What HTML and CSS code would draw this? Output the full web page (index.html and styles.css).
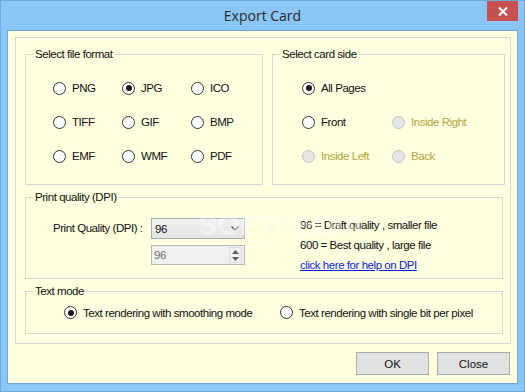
FILE: index.html
```html
<!DOCTYPE html>
<html lang="en">
<head>
    <meta charset="UTF-8">
    <title>Export Card</title>
    <link rel="stylesheet" href="styles.css">
</head>
<body>
    <div class="window">
        <div class="titlebar">
            <span class="title">Export Card</span>
            <button class="close-x" title="Close">
                <svg width="10" height="9" viewBox="0 0 10 9"><path d="M1 0.5 L9 8.5 M9 0.5 L1 8.5" stroke="#fff" stroke-width="2"/></svg>
            </button>
        </div>

        <div class="client">
            <div class="panel">
                <div class="row-top">
                    <div class="group group-format">
                        <span class="group-title">Select file format</span>
                        <div class="radio-grid">
                            <label class="radio"><span class="dot"></span>PNG</label>
                            <label class="radio"><span class="dot checked"></span>JPG</label>
                            <label class="radio"><span class="dot"></span>ICO</label>
                            <label class="radio"><span class="dot"></span>TIFF</label>
                            <label class="radio"><span class="dot"></span>GIF</label>
                            <label class="radio"><span class="dot"></span>BMP</label>
                            <label class="radio"><span class="dot"></span>EMF</label>
                            <label class="radio"><span class="dot"></span>WMF</label>
                            <label class="radio"><span class="dot"></span>PDF</label>
                        </div>
                    </div>

                    <div class="group group-side">
                        <span class="group-title">Select card side</span>
                        <div class="radio-grid side-grid">
                            <label class="radio"><span class="dot checked"></span>All Pages</label>
                            <span></span>
                            <label class="radio"><span class="dot"></span>Front</label>
                            <label class="radio disabled"><span class="dot"></span>Inside Right</label>
                            <label class="radio disabled"><span class="dot"></span>Inside Left</label>
                            <label class="radio disabled"><span class="dot"></span>Back</label>
                        </div>
                    </div>
                </div>

                <div class="group group-dpi">
                    <span class="group-title">Print quality (DPI)</span>
                    <div class="dpi-row">
                        <span class="dpi-label">Print Quality (DPI) :</span>
                        <div class="dpi-controls">
                            <div class="combo">
                                <span>96</span>
                                <svg width="8" height="5" viewBox="0 0 8 5"><path d="M0.5 0.5 L4 4 L7.5 0.5" fill="none" stroke="#555" stroke-width="1.2"/></svg>
                            </div>
                            <div class="spin">
                                <span>96</span>
                                <div class="spin-btns">
                                    <svg width="7" height="4" viewBox="0 0 7 4"><path d="M0 4 L3.5 0 L7 4 Z" fill="#606060"/></svg>
                                    <svg width="7" height="4" viewBox="0 0 7 4"><path d="M0 0 L3.5 4 L7 0 Z" fill="#606060"/></svg>
                                </div>
                            </div>
                        </div>
                        <div class="dpi-hint">
                            <p>96 = Draft quality , smaller file</p>
                            <p>600 = Best quality , large file</p>
                            <p><a href="#">click here for help on DPI</a></p>
                        </div>
                    </div>
                </div>

                <div class="group group-text">
                    <span class="group-title">Text mode</span>
                    <div class="text-modes">
                        <label class="radio mode-first"><span class="dot checked"></span>Text rendering with smoothing mode</label>
                        <label class="radio"><span class="dot"></span>Text rendering with single bit per pixel</label>
                    </div>
                </div>
            </div>

            <div class="actions">
                <button class="btn">OK</button>
                <button class="btn">Close</button>
            </div>

            <div class="watermark">SOFTPEDIA</div>
        </div>
    </div>
</body>
</html>
```

FILE: styles.css
```css
* {
    box-sizing: border-box;
}
body {
    margin: 0;
    font-family: "Liberation Sans", Arial, sans-serif;
    font-size: 11.5px;
    letter-spacing: -0.45px;
    color: #111;
}
.window {
    width: 525px;
    height: 392px;
    background-color: #8bc6f7;
    border: 1px solid #6fa8dc;
}
.titlebar {
    height: 29px;
    display: grid;
    grid-template-columns: 1fr auto 1fr;
}
.title {
    grid-column: 2;
    align-self: center;
    font-family: "Open Sans", "Liberation Sans", sans-serif;
    font-size: 14px;
    letter-spacing: 0;
    color: #2a2a2a;
    padding-bottom: 1px;
}
.close-x {
    grid-column: 3;
    justify-self: end;
    align-self: start;
    width: 31px;
    height: 20px;
    margin-right: 6px;
    padding: 0;
    border: none;
    background-color: #c75050;
    display: flex;
    align-items: center;
    justify-content: center;
}
.client {
    position: relative;
    margin: 0 6px;
    height: 354px;
    background-color: #ffffe0;
    border: 1px solid #6ea5d6;
}
.panel {
    margin: 6px 0 0 7px;
    width: 496px;
    height: 307px;
    border: 1px solid #d6d6d6;
    padding: 16px 0 0 9px;
}
.row-top {
    display: flex;
    gap: 9px;
}
.group {
    position: relative;
    border: 1px solid #d6d6d6;
}
.group-title {
    position: absolute;
    top: -8px;
    left: 7px;
    padding: 0 2px;
    line-height: 14px;
    background-color: #ffffe0;
}
.group-format {
    width: 238px;
    height: 131px;
}
.group-side {
    width: 233px;
    height: 131px;
}
.group-dpi {
    width: 478px;
    height: 82px;
    margin-top: 12px;
}
.group-text {
    width: 478px;
    height: 43px;
    margin-top: 12px;
}

/* radio buttons */
.radio-grid {
    display: grid;
    grid-template-columns: 69px 69px 69px;
    grid-auto-rows: 34px;
    padding: 16px 0 0 27px;
}
.side-grid {
    grid-template-columns: 90px 90px;
    padding-left: 29px;
}
.radio {
    display: flex;
    align-items: center;
    gap: 6px;
    white-space: nowrap;
}
.dot {
    position: relative;
    width: 13px;
    height: 13px;
    border: 1px solid #333;
    border-radius: 50%;
    background-color: #fff;
    flex-shrink: 0;
}
.dot.checked::after {
    content: "";
    position: absolute;
    left: 2.5px;
    top: 2.5px;
    width: 6px;
    height: 6px;
    border-radius: 50%;
    background-color: #1b1b1b;
}
.radio.disabled {
    color: #b0a63a;
}
.radio.disabled .dot {
    border-color: #c2c2c2;
    background-color: #e6e6e6;
}

/* dpi */
.dpi-row {
    display: flex;
    padding: 20px 0 0 27px;
}
.dpi-label {
    width: 98px;
    line-height: 21px;
    white-space: nowrap;
}
.dpi-controls {
    width: 94px;
}
.combo {
    height: 21px;
    border: 1px solid #acacac;
    background: linear-gradient(#f1f1f1, #e4e4e4);
    display: flex;
    align-items: center;
    justify-content: space-between;
    padding: 0 5px 0 3px;
}
.spin {
    height: 20px;
    margin-top: 6px;
    border: 1px solid #b8b8b8;
    background-color: #f0f0f0;
    color: #6d6d6d;
    display: flex;
    align-items: center;
    justify-content: space-between;
    padding-left: 2px;
}
.spin-btns {
    width: 13px;
    height: 16px;
    margin-right: 2px;
    border: 1px solid #dcdcdc;
    display: flex;
    flex-direction: column;
    align-items: center;
    justify-content: space-around;
}
.dpi-hint {
    margin: -3px 0 0 55px;
}
.dpi-hint p {
    margin: 0;
    line-height: 20px;
    white-space: nowrap;
}
.dpi-hint a {
    color: #0a1ee6;
}

/* text mode */
.text-modes {
    display: flex;
    padding: 14px 0 0 38px;
}
.mode-first {
    width: 216px;
}

/* buttons */
.actions {
    display: flex;
    justify-content: flex-end;
    gap: 8px;
    padding: 8px 7px 0 0;
}
.btn {
    width: 73px;
    height: 23px;
    border: 1px solid #adadad;
    background-color: #e1e1e1;
    font: inherit;
    color: #111;
}
.watermark {
    position: absolute;
    left: 190px;
    top: 178px;
    font-family: "Liberation Sans", sans-serif;
    font-weight: bold;
    font-size: 29px;
    letter-spacing: 0;
    color: rgba(255, 255, 255, 0.4);
    pointer-events: none;
}
```
